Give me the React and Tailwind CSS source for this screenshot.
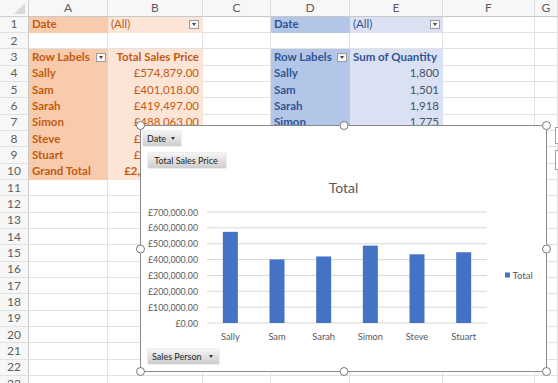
import React from "react";

const COLS = ["A", "B", "C", "D", "E", "F", "G"];

const people = [
  ["Sally", "£574,879.00", "1,800", 574879],
  ["Sam", "£401,018.00", "1,501", 401018],
  ["Sarah", "£419,497.00", "1,918", 419497],
  ["Simon", "£488,063.00", "1,775", 488063],
  ["Steve", "£433,112.00", "1,702", 433112],
  ["Stuart", "£446,318.00", "1,744", 446318],
];

const oLabel = "bg-[#f8cbad] border-[#f8cbad] text-[#c55a11] font-bold pl-[3px]";
const oHead = "bg-[#fce4d6] border-[#fce4d6] text-[#c55a11] font-bold justify-end pr-[3px]";
const oVal = "bg-[#fce4d6] border-[#fce4d6] text-[#c55a11] justify-end pr-[3px]";
const oValB = "bg-[#fce4d6] border-[#fce4d6] text-[#c55a11] font-bold justify-end pr-[3px]";
const oAll = "bg-[#fce4d6] border-[#fce4d6] text-[#c55a11] justify-between pl-[3px] pr-[3px]";
const bLabel = "bg-[#b4c6e7] border-[#b4c6e7] text-[#305496] font-bold pl-[3px]";
const bHead = "bg-[#d9e1f2] border-[#d9e1f2] text-[#305496] font-bold pl-[3px]";
const bVal = "bg-[#d9e1f2] border-[#d9e1f2] text-[#44546a] justify-end pr-[3px]";
const bValB = "bg-[#d9e1f2] border-[#d9e1f2] text-[#305496] font-bold justify-end pr-[3px]";
const bAll = "bg-[#d9e1f2] border-[#d9e1f2] text-[#305496] justify-between pl-[3px] pr-[2px]";

const cells = {
  A1: { t: "Date", s: oLabel },
  B1: { t: "(All)", s: oAll, dd: true },
  D1: { t: "Date", s: bLabel },
  E1: { t: "(All)", s: bAll, dd: true },
  A3: { t: "Row Labels", s: oLabel + " justify-between pr-[1px]", dd: true },
  B3: { t: "Total Sales Price", s: oHead },
  D3: { t: "Row Labels", s: bLabel + " justify-between pr-[2px]", dd: true },
  E3: { t: "Sum of Quantity", s: bHead },
  A10: { t: "Grand Total", s: oLabel },
  B10: { t: "£2,762,887.00", s: oValB },
  D10: { t: "Grand Total", s: bLabel },
  E10: { t: "10,440", s: bValB },
};
people.forEach(([n, p, q], i) => {
  const r = i + 4;
  cells["A" + r] = { t: n, s: oLabel };
  cells["B" + r] = { t: p, s: oVal };
  cells["D" + r] = { t: n, s: bLabel };
  cells["E" + r] = { t: q, s: bVal };
});

function DropDown() {
  return (
    <span className="flex h-[9px] w-[10px] shrink-0 items-center justify-center border border-[#9c9c9c] bg-[#f7f7f7]">
      <span className="h-0 w-0 border-x-[2.5px] border-t-[3px] border-x-transparent border-t-[#444]" />
    </span>
  );
}

function ChartButton({ label, className, arrow }) {
  return (
    <div
      className={`flex h-[15px] items-center justify-between bg-gradient-to-b from-[#f5f5f5] to-[#cdcdcd] pl-[4px] pr-[6px] text-[9px] text-[#262626] shadow-[0_0_1px_#999] ${className}`}
    >
      <span>{label}</span>
      {arrow && (
        <span className="h-0 w-0 border-x-[2.5px] border-t-[3px] border-x-transparent border-t-[#333]" />
      )}
    </div>
  );
}

const gridY = [0, 1, 2, 3, 4, 5, 6, 7].map((i) => 122 - i * 15.857);
const yLabels = [
  "£0.00",
  "£100,000.00",
  "£200,000.00",
  "£300,000.00",
  "£400,000.00",
  "£500,000.00",
  "£600,000.00",
  "£700,000.00",
];

function Plot() {
  const cw = 280 / 6;
  return (
    <svg width="404" height="145" className="block">
      {gridY.map((y, i) => (
        <g key={i}>
          <line x1="66" x2="346" y1={y} y2={y} stroke="#d9d9d9" strokeWidth="1" />
          <text x="57" y={y} textAnchor="end" dominantBaseline="central" fontSize="8.8" fill="#595959">
            {yLabels[i]}
          </text>
        </g>
      ))}
      {people.map(([n, , , v], i) => {
        const cx = 66 + cw * (i + 0.5);
        const h = (v / 700000) * 111;
        return (
          <g key={n}>
            <rect x={cx - 7.5} y={122 - h} width="15" height={h} fill="#4472c4" />
            <text x={cx} y="135" textAnchor="middle" dominantBaseline="central" fontSize="9.3" fill="#595959">
              {n}
            </text>
          </g>
        );
      })}
      <rect x="364" y="71.5" width="5" height="5" fill="#4472c4" />
      <text x="371.5" y="74.3" dominantBaseline="central" fontSize="9.5" fill="#595959">
        Total
      </text>
    </svg>
  );
}

function Handle({ className }) {
  return (
    <span className={`absolute h-[9px] w-[9px] rounded-full border border-[#7a7a7a] bg-white ${className}`} />
  );
}

export default function App() {
  const rows = Array.from({ length: 23 }, (_, i) => i + 1);
  return (
    <div className="relative h-[383px] w-[558px] overflow-hidden bg-white font-[Lato,sans-serif] text-[11.5px]">
      <div className="grid grid-cols-[29px_79px_95px_68px_79px_93px_92px_23px]">
        <div className="relative h-[16.7px] border-b border-r border-[#cfcfcf] bg-[#f7f7f7]">
          <svg className="absolute right-[3px] bottom-[2px]" width="11" height="11">
            <polygon points="11,0 11,11 0,11" fill="#d8d8d8" />
          </svg>
        </div>
        {COLS.map((c) => (
          <div
            key={c}
            className="flex h-[16.7px] items-center justify-center border-b border-r border-b-[#c8c8c8] border-r-[#dcdcdc] bg-[#f7f7f7] text-[12px] text-[#5e5e5e]"
          >
            {c}
          </div>
        ))}
        {rows.map((r) => (
          <React.Fragment key={r}>
            <div className="flex h-[16.33px] items-center justify-center border-b border-r border-b-[#e1e1e1] border-r-[#c8c8c8] bg-[#f7f7f7] text-[12px] text-[#5e5e5e]">
              {r}
            </div>
            {COLS.map((c) => {
              const cell = cells[c + r];
              if (!cell)
                return <div key={c} className="h-[16.33px] border-b border-r border-[#e1e1e1]" />;
              return (
                <div
                  key={c}
                  className={`flex h-[16.33px] items-center overflow-hidden whitespace-nowrap border-b border-r leading-[16px] ${cell.s}`}
                >
                  <span>{cell.t}</span>
                  {cell.dd && <DropDown />}
                </div>
              );
            })}
          </React.Fragment>
        ))}
      </div>

      {/* pivot chart */}
      <div className="absolute left-[140px] top-[125px] h-[247px] w-[407px] border border-[#8a8a8a] bg-white">
        <ChartButton label="Date" arrow className="ml-[2px] mt-[5px] w-[38px]" />
        <ChartButton label="Total Sales Price" className="ml-[7px] mt-[7px] h-[14px] w-[78px] justify-center px-0" />
        <div className="h-[33px] pt-[12px] text-center text-[14px] leading-[16px] text-[#595959]">Total</div>
        <Plot />
        <ChartButton label="Sales Person" arrow className="ml-[7px] mt-[3px] w-[71px]" />
        <Handle className="-left-[5px] -top-[5px]" />
        <Handle className="-top-[5px] left-1/2 -translate-x-1/2" />
        <Handle className="-right-[5px] -top-[5px]" />
        <Handle className="-left-[5px] top-1/2 -translate-y-1/2" />
        <Handle className="-right-[5px] top-1/2 -translate-y-1/2" />
        <Handle className="-bottom-[5px] -left-[5px]" />
        <Handle className="-bottom-[5px] left-1/2 -translate-x-1/2" />
        <Handle className="-bottom-[5px] -right-[5px]" />
      </div>
      <div className="absolute left-[555px] top-[127px] h-[17px] w-[20px] border border-[#a0a0a0] bg-white" />
      <div className="absolute left-[555px] top-[150px] h-[20px] w-[20px] border border-[#a0a0a0] bg-white" />
    </div>
  );
}
